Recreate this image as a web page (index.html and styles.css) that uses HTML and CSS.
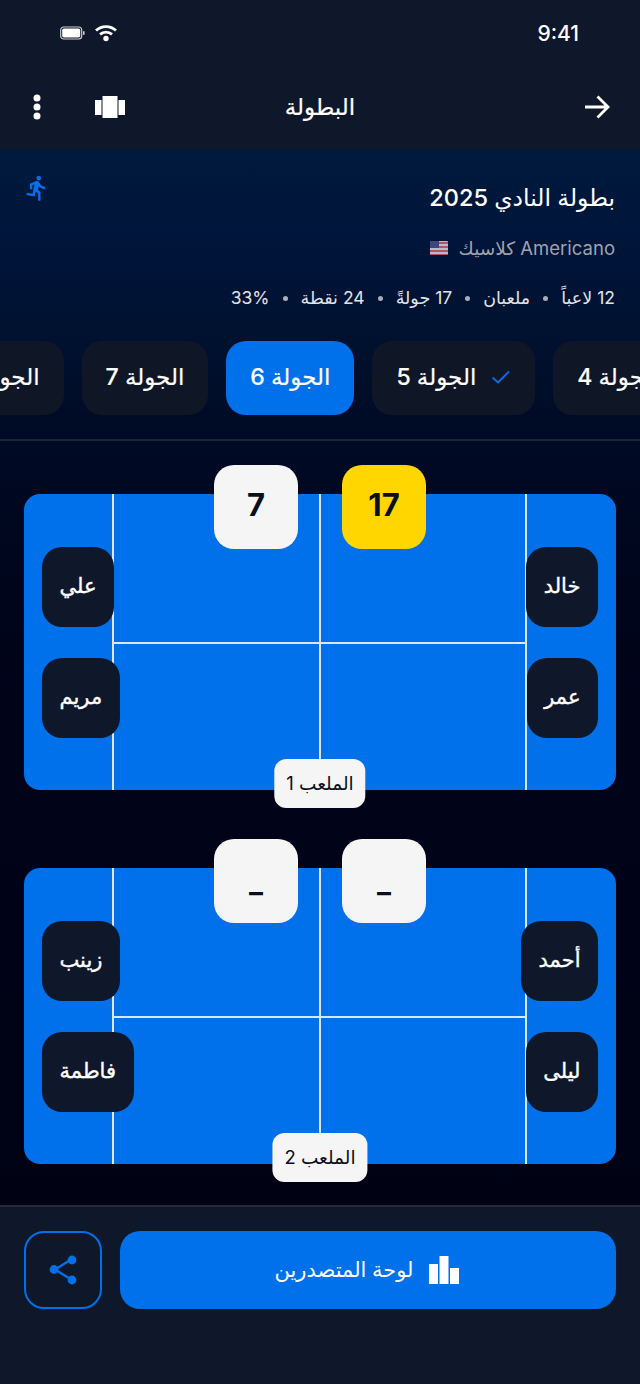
FILE: index.html
```html
<!DOCTYPE html>
<html lang="ar" dir="rtl">
<head>
<meta charset="utf-8">
<title>البطولة</title>
<link rel="stylesheet" href="styles.css">
</head>
<body>
<div class="app">
  <div class="top">
    <div class="status">
      <span class="time">9:41</span>
      <span class="status-icons">
        <svg class="wifi" width="22" height="18" viewBox="0 0 22 18"><path d="M1 6.500C6.700 1.200 15.300 1.200 21 6.500" fill="none" stroke="#fff" stroke-width="2.800"/><path d="M5 10.400c3.500-3 8.500-3 12 0" fill="none" stroke="#fff" stroke-width="2.800"/><circle cx="11" cy="14.500" r="2.700" fill="#fff"/></svg>
        <svg class="battery" width="25" height="14" viewBox="0 0 25 14"><rect x=".7" y="1" width="21" height="12" rx="3" fill="none" stroke="#c9cbd0" stroke-width="1.200"/><rect x="2.200" y="2.500" width="18" height="9" rx="1.800" fill="#fff"/><rect x="23" y="5" width="1.600" height="4" rx=".8" fill="#c9cbd0"/></svg>
      </span>
    </div>
    <header class="nav">
      <svg class="back" width="28" height="26" viewBox="0 0 28 26"><path d="M2 13H25M14.500 2.500 25 13 14.500 23.500" fill="none" stroke="#fff" stroke-width="2.800"/></svg>
      <h1 class="nav-title">البطولة</h1>
      <span class="nav-actions">
        <svg width="32" height="22" viewBox="0 0 32 22"><rect x="1" y="4" width="6.500" height="15" fill="#fff"/><rect x="8.500" y="0" width="15" height="22" fill="#fff"/><rect x="24.500" y="4" width="6.500" height="15" fill="#fff"/></svg>
        <svg class="dots" width="8" height="26" viewBox="0 0 8 26"><circle cx="4" cy="4" r="3.500" fill="#fff"/><circle cx="4" cy="13" r="3.500" fill="#fff"/><circle cx="4" cy="22" r="3.500" fill="#fff"/></svg>
      </span>
    </header>
  </div>

  <main class="main">
    <section class="hero">
      <div class="hero-text">
        <h2 class="hero-title">بطولة النادي 2025</h2>
        <p class="hero-type">Americano كلاسيك
          <svg class="flag" width="18" height="14" viewBox="0 0 18 14"><rect width="18" height="14" rx="1" fill="#d9d9e0"/><path d="M0 1h18v2H0zM0 5h18v2H0zM0 9h18v2H0zM0 13h18v1H0z" fill="#d0606c"/><rect width="9" height="7" fill="#47508c"/></svg>
        </p>
        <p class="hero-stats"><span>12 لاعباً</span><i></i><span>ملعبان</span><i></i><span>17 جولةً</span><i></i><span>24 نقطة</span><i></i><span dir="ltr">33%</span></p>
      </div>
      <svg class="runner" width="28" height="28" viewBox="0 0 24 24"><path fill="#0070eb" d="M13.490 5.480c1.100 0 2-.9 2-2s-.9-2-2-2-2 .9-2 2 .9 2 2 2zm-3.600 13.900l1-4.400 2.100 2v6h2v-7.500l-2.100-2 .6-3c1.300 1.500 3.300 2.500 5.500 2.500v-2c-1.900 0-3.500-1-4.300-2.400l-1-1.600c-.4-.6-1-1-1.700-1-.3 0-.5.100-.8.100l-5.200 2.200v4.700h2v-3.400l1.800-.7-1.600 8.100-4.900-1-.4 2 7 1.400z"/></svg>
    </section>

    <nav class="tabs">
      <div class="tab-row">
        <span class="tab"><svg class="check" width="20" height="14" viewBox="0 0 20 14"><path d="M1.500 7.500 7 12.500 18 1.500" fill="none" stroke="#0070eb" stroke-width="1.800"/></svg>الجولة 4</span>
        <span class="tab"><svg class="check" width="20" height="14" viewBox="0 0 20 14"><path d="M1.500 7.500 7 12.500 18 1.500" fill="none" stroke="#0070eb" stroke-width="1.800"/></svg>الجولة 5</span>
        <span class="tab active">الجولة 6</span>
        <span class="tab">الجولة 7</span>
        <span class="tab">الجولة 8</span>
      </div>
    </nav>

    <section class="courts">
      <article class="court">
        <div class="line line-a"></div><div class="line line-b"></div><div class="line line-c"></div><div class="line line-h"></div>
        <div class="scores"><span class="score win">17</span><span class="score">7</span></div>
        <div class="sides">
          <div class="side"><span class="player">خالد</span><span class="player">عمر</span></div>
          <div class="side"><span class="player">علي</span><span class="player">مريم</span></div>
        </div>
        <span class="court-label">الملعب 1</span>
      </article>
      <article class="court">
        <div class="line line-a"></div><div class="line line-b"></div><div class="line line-c"></div><div class="line line-h"></div>
        <div class="scores"><span class="score dash">–</span><span class="score dash">–</span></div>
        <div class="sides">
          <div class="side"><span class="player">أحمد</span><span class="player">ليلى</span></div>
          <div class="side"><span class="player">زينب</span><span class="player">فاطمة</span></div>
        </div>
        <span class="court-label">الملعب 2</span>
      </article>
    </section>
  </main>

  <footer class="footer">
    <button class="primary"><svg width="30" height="28" viewBox="0 0 30 28"><rect x="0" y="8" width="9" height="20" fill="#fff"/><rect x="10.500" y="0" width="9" height="28" fill="#fff"/><rect x="21" y="12" width="9" height="16" fill="#fff"/></svg><span class="primary-text">لوحة المتصدرين</span></button>
    <button class="share"><svg width="30" height="32" viewBox="0 0 30 32"><path d="M24 5 7 15.500 24 26" fill="none" stroke="#0070eb" stroke-width="2.400"/><circle cx="24" cy="6" r="4.400" fill="#0070eb"/><circle cx="6" cy="15.500" r="4.400" fill="#0070eb"/><circle cx="24" cy="26" r="4.400" fill="#0070eb"/></svg></button>
  </footer>
</div>
</body>
</html>
```
FILE: styles.css
```css
* { box-sizing: border-box; }
html, body { margin: 0; padding: 0; }
body {
  background: #00041a;
  color: #fff;
  font-family: Inter, "Noto Sans", "DejaVu Sans", sans-serif;
}
h1, h2, p { margin: 0; font-weight: 500; }
.app { width: 640px; height: 1384px; display: flex; flex-direction: column; overflow: hidden; }

.top { background: #0f172a; height: 150px; display: flex; flex-direction: column; }
.status { height: 66px; padding: 19px 61px 0 60px; display: flex; justify-content: space-between; align-items: flex-start; }
.time { font-size: 21px; font-weight: 500; line-height: 30px; direction: ltr; }
.status-icons { display: flex; align-items: center; gap: 10px; height: 28px; }
.nav { height: 84px; padding: 0 29px 2px; display: grid; grid-template-columns: 1fr auto 1fr; align-items: center; }
.nav-title { font-size: 23px; line-height: 28px; -webkit-text-stroke: .2px currentColor; }
.nav-actions { display: flex; align-items: center; justify-content: flex-end; gap: 53px; margin-left: 4px; }

.main { flex: 1; display: flex; flex-direction: column; background: linear-gradient(180deg, #001a3d 0, #00143a 100px, #001230 180px, #000a24 290px, #00041a 480px, #000214 100%); }
.hero { height: 191px; padding: 24px 25px 0; display: flex; justify-content: space-between; align-items: flex-start; }
.hero-title { font-size: 23.500px; line-height: 48px; margin-bottom: 5px; }
.hero-type { font-size: 18.500px; line-height: 42px; color: #9ea3ad; font-weight: 400; display: flex; align-items: center; gap: 11px; margin-bottom: 16px; }
.hero-stats { font-size: 17.500px; line-height: 26px; color: #e1e3e6; font-weight: 400; display: flex; align-items: center; gap: 13px; }
.hero-stats i { width: 5px; height: 5px; border-radius: 50%; background: #a9adb5; }
.flag { opacity: .85; }
.runner { margin-left: -2px; }

.tabs { height: 100px; overflow: hidden; border-bottom: 2px solid #1c2438; }
.tab-row { display: flex; gap: 18px; margin-right: -77px; width: max-content; }
.tab { height: 74px; padding: 0 24px 2px; border-radius: 20px; background: #0f1626; color: #fff; font-size: 23px; font-weight: 500; display: flex; align-items: center; gap: 15px; white-space: nowrap; -webkit-text-stroke: .2px currentColor; }
.tab.active { background: #0070eb; }

.courts { flex: 1; padding: 53px 24px 0; display: flex; flex-direction: column; gap: 78px; }
.court { position: relative; height: 296px; border-radius: 16px; background: #0070eb; }
.line { position: absolute; background: #d8e8fb; }
.line-a { top: 0; bottom: 0; width: 2px; right: 89px; }
.line-b { top: 0; bottom: 0; width: 2px; right: 295px; }
.line-c { top: 0; bottom: 0; width: 2px; left: 88px; }
.line-h { left: 89px; right: 89px; height: 2px; top: 148px; }
.scores { position: absolute; top: -29px; left: 0; right: 0; display: flex; justify-content: center; gap: 44px; }
.score { width: 84px; height: 84px; padding-bottom: 5px; border-radius: 20px; background: #f5f5f5; color: #0a0f1c; font-size: 31px; font-weight: 700; display: flex; align-items: center; justify-content: center; }
.score.win { background: #ffd600; }
.score.dash { padding: 22px 0 0; font-size: 28px; font-weight: 700; }
.sides { position: relative; height: 100%; padding: 53px 18px 0; display: flex; justify-content: space-between; }
.side { display: flex; flex-direction: column; gap: 31px; align-items: flex-start; }
.side:last-child { align-items: flex-end; }
.player { height: 80px; padding: 0 17.500px 4px; border-radius: 20px; background: #0f172a; color: #fff; font-size: 21px; font-weight: 500; -webkit-text-stroke: .4px currentColor; display: flex; align-items: center; justify-content: center; }
.court-label { position: absolute; bottom: -18px; left: 50%; transform: translateX(-50%); height: 49px; padding: 0 12px 2px; border-radius: 12px; background: #f5f5f5; color: #0a0f1c; font-size: 18.500px; display: flex; align-items: center; white-space: nowrap; }

.footer { height: 179px; flex: none; background: #0f172a; border-top: 2px solid #232a3b; padding: 24px 24px 0; display: flex; gap: 18px; align-items: flex-start; }
button { font: inherit; color: inherit; border: 0; padding: 0; }
.primary { flex: 1; height: 78px; padding-right: 3px; border-radius: 20px; background: #0070eb; font-size: 21px; font-weight: 500; display: flex; align-items: center; justify-content: center; gap: 15px; }
.primary-text { padding-bottom: 2px; }
.share { width: 78px; height: 78px; border-radius: 20px; background: transparent; border: 2px solid #0070eb; display: flex; align-items: center; justify-content: center; }
```
